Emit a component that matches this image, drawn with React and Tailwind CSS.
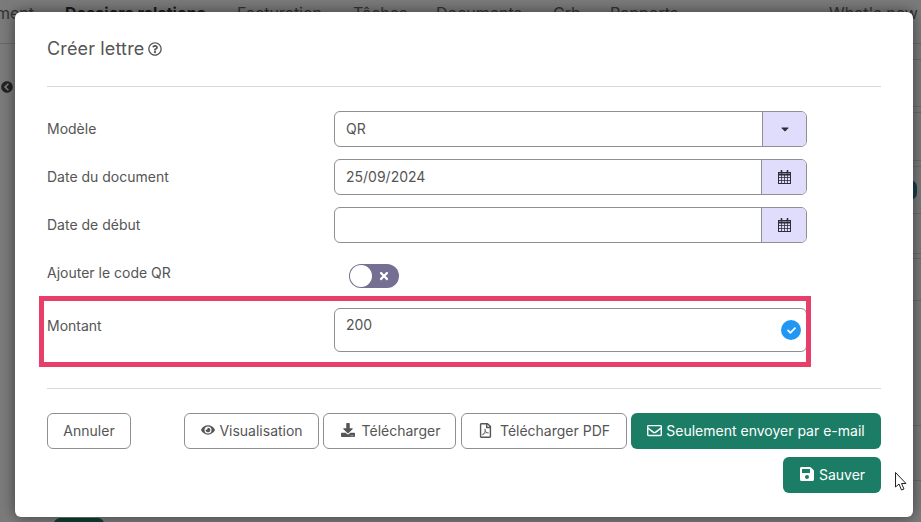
import React from 'react';
import {
  FaRegQuestionCircle,
  FaCaretDown,
  FaTimes,
  FaCheck,
  FaEye,
  FaDownload,
  FaRegFilePdf,
  FaRegEnvelope,
  FaSave,
  FaChevronCircleLeft,
} from 'react-icons/fa';

const font = { fontFamily: 'Inter, sans-serif' };

// table rows of the dimmed page, only visible right of the modal
const pageLines = [59, 106, 112, 160, 166, 213, 253, 258, 300, 425, 480];

const NavBar = () => (
  <div className="relative h-[44px] overflow-hidden border-b border-[#696969] text-[16px] text-[#333]">
    <span className="absolute left-[-4px] top-[1px]">ment</span>
    <span className="absolute left-[65px] top-[1px] font-bold text-[#1c1c1c]">Dossiers relations</span>
    <span className="absolute left-[237px] top-[1px]">Facturation</span>
    <span className="absolute left-[353px] top-[1px]">Tâches</span>
    <span className="absolute left-[436px] top-[1px]">Documents</span>
    <span className="absolute left-[553px] top-[1px]">Crh</span>
    <span className="absolute left-[610px] top-[1px]">Rapports</span>
    <span className="absolute left-[829px] top-[1px]">What's new</span>
  </div>
);

const CalendarIcon = () => (
  <svg width="13" height="14" viewBox="0 0 13 14" fill="none" stroke="#2d2d3a" strokeWidth="1">
    <rect x="0.5" y="2.5" width="12" height="11" />
    <path d="M0.5 4.5H12.5" strokeWidth="2" />
    <path d="M0.5 7.5H12.5M0.5 10.5H12.5M3.5 5V13.5M6.5 5V13.5M9.5 5V13.5" strokeWidth="0.8" />
    <path d="M3.5 0.5V3M9.5 0.5V3" strokeWidth="1.6" strokeLinecap="round" />
  </svg>
);

const Row = ({ label, children, className = '' }) => (
  <div className={`flex ${className}`}>
    <label className="w-[287px] shrink-0 text-[14px] leading-[20px] text-[#555]">{label}</label>
    <div className="w-[473px]">{children}</div>
  </div>
);

const AddonInput = ({ value, addonWidth, children }) => (
  <div className="flex h-[36px] overflow-hidden rounded-[6px] border border-[#8f8f8f]">
    <div className="flex-1 px-[11px] text-[14px] leading-[33px] text-[#555]">{value}</div>
    <div className={`flex items-center justify-center border-l border-[#8f8f8f] bg-[#e0dcfb] text-[#2d2d3a] ${addonWidth}`}>
      {children}
    </div>
  </div>
);

const OutlineButton = ({ children, className = '' }) => (
  <button className={`flex h-[36px] items-center justify-center gap-[4px] rounded-[6px] border border-[#8f8f8f] bg-white pb-[2px] text-[14px] text-[#555] ${className}`}>
    {children}
  </button>
);

const GreenButton = ({ children, className = '' }) => (
  <button className={`flex h-[36px] items-center justify-center gap-[4px] rounded-[6px] bg-[#1b7d66] pb-[2px] text-[14px] text-white ${className}`}>
    {children}
  </button>
);

export default function App() {
  return (
    <div className="relative h-[522px] w-[921px] overflow-hidden bg-[#7b7b7b]" style={font}>
      <NavBar />
      {pageLines.map((y) => (
        <div key={y} className="absolute right-0 h-px w-[10px] bg-[#6b6b6b]" style={{ top: y }} />
      ))}
      <FaChevronCircleLeft className="absolute left-[1px] top-[81px] text-[#222]" size={12} />
      <div className="absolute left-[910px] top-[180px] h-[20px] w-[7px] rounded-r-full bg-[#1d3b4d]" />
      <div className="absolute left-[54px] top-[518px] h-[8px] w-[50px] rounded-t-[6px] bg-[#0d3f33]" />

      {/* modal */}
      <div className="absolute left-[15px] top-[12px] h-[505px] w-[898px] rounded-[6px] bg-white px-[32px] shadow-[0_0_14px_rgba(0,0,0,0.5)]">
        <div className="flex h-[75px] items-center gap-[4px] border-b border-[#d9d9d9] pb-[2px]">
          <h2 className="text-[18px] tracking-[0.15px] text-[#555]">Créer lettre</h2>
          <FaRegQuestionCircle size={14} className="mt-[1px] text-[#555]" />
        </div>

        <div className="mt-[24px] flex flex-col gap-[12px]">
          <Row label="Modèle" className="[&>label]:pt-[8px]">
            <AddonInput value="QR" addonWidth="w-[44px]">
              <FaCaretDown size={12} />
            </AddonInput>
          </Row>
          <Row label="Date du document" className="[&>label]:pt-[8px]">
            <AddonInput value="25/09/2024" addonWidth="w-[45px]">
              <CalendarIcon />
            </AddonInput>
          </Row>
          <Row label="Date de début" className="[&>label]:pt-[8px]">
            <AddonInput value="" addonWidth="w-[45px]">
              <CalendarIcon />
            </AddonInput>
          </Row>
          <Row label="Ajouter le code QR" className="mt-[9px] h-[24px] [&>label]:-mt-[1px]">
            <div className="ml-[15px] flex h-[24px] w-[50px] items-center justify-between rounded-full bg-[#766f94] pl-[1px] pr-[9px]">
              <span className="h-[22px] w-[22px] rounded-full bg-white" />
              <FaTimes size={12} className="text-white" />
            </div>
          </Row>
          <Row label="Montant" className="mt-[8px] [&>label]:pt-[8px]">
            <div className="relative h-[44px] rounded-[6px] border border-[#8f8f8f] px-[11px] text-[14px] leading-[31px] text-[#555]">
              200
              <span className="absolute right-[5px] top-[11px] flex h-[20px] w-[20px] items-center justify-center rounded-full bg-[#2196f3]">
                <FaCheck size={9} className="text-white" />
              </span>
            </div>
          </Row>
        </div>

        <div className="mt-[36px] border-t border-[#d9d9d9]" />

        <div className="mt-[24px] flex justify-between">
          <OutlineButton className="w-[84px]">Annuler</OutlineButton>
          <div className="flex w-[697px] flex-wrap justify-end gap-x-[4px] gap-y-[8px]">
            <OutlineButton className="w-[135px] pl-[1px]">
              <FaEye size={14} /> Visualisation
            </OutlineButton>
            <OutlineButton className="w-[133px] pl-[2px]">
              <FaDownload size={14} className="mr-[3px]" /> Télécharger
            </OutlineButton>
            <OutlineButton className="ml-[1px] w-[166px]">
              <FaRegFilePdf size={15} className="mr-[3px]" /> Télécharger PDF
            </OutlineButton>
            <GreenButton className="w-[250px]">
              <FaRegEnvelope size={15} /> Seulement envoyer par e-mail
            </GreenButton>
            <GreenButton className="w-[98px]">
              <FaSave size={16} /> Sauver
            </GreenButton>
          </div>
        </div>
      </div>

      {/* annotation */}
      <div className="absolute left-[39px] top-[296px] h-[71px] w-[772px] border-[5px] border-[#e83e6a]" />

      {/* cursor */}
      <svg className="absolute left-[894px] top-[471px]" width="14" height="21" viewBox="0 0 14 21">
        <path d="M1.5 1.5 V16 L5 13 L7.5 19 L10 18 L7.5 12.5 H12 Z" fill="#fff" stroke="#222" strokeWidth="1" />
      </svg>
    </div>
  );
}
